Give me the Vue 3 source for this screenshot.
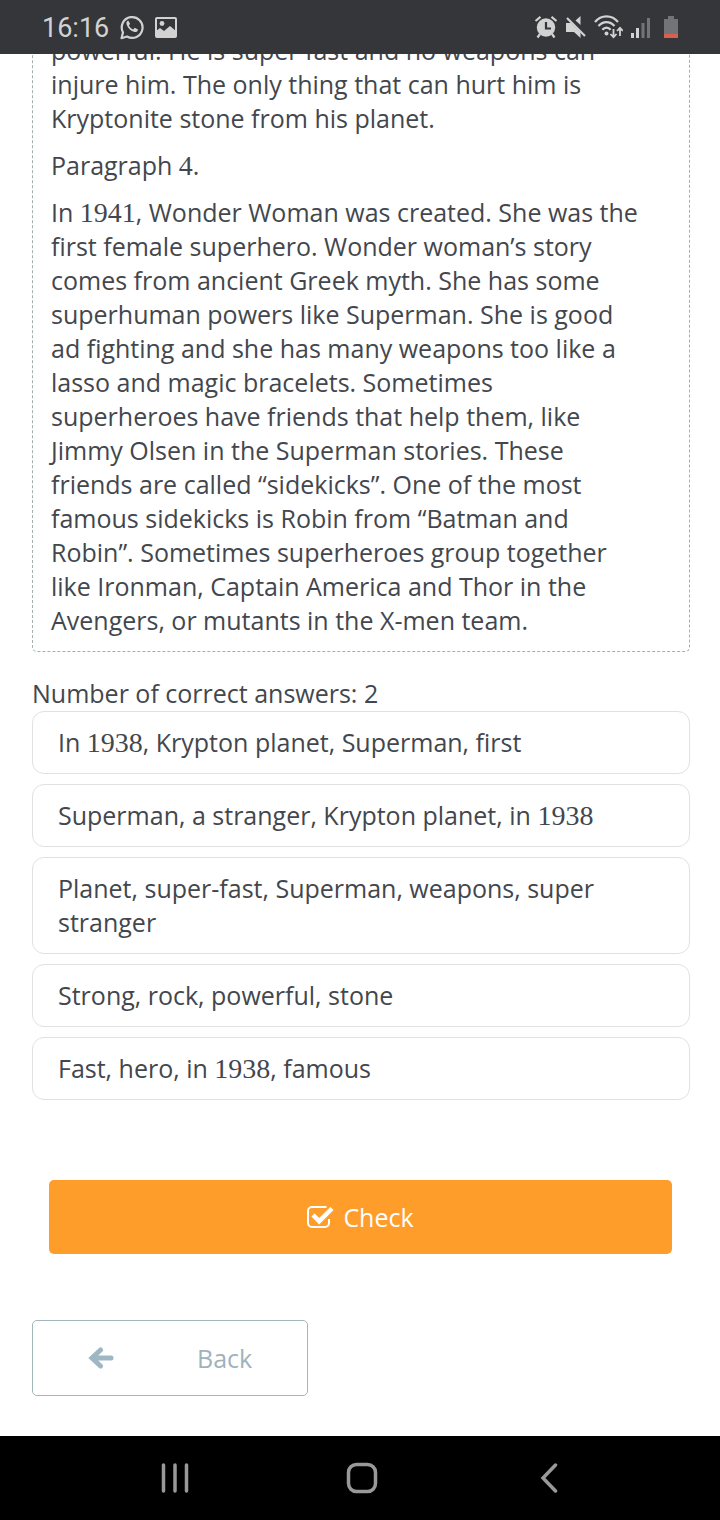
<script setup>
import { ref } from 'vue'

const paragraphs = [
  'powerful. He is super fast and no weapons can\ninjure him. The only thing that can hurt him is\nKryptonite stone from his planet.',
  'Paragraph 4.',
  'In 1941, Wonder Woman was created. She was the\nfirst female superhero. Wonder woman’s story\ncomes from ancient Greek myth. She has some\nsuperhuman powers like Superman. She is good\nad fighting and she has many weapons too like a\nlasso and magic bracelets. Sometimes\nsuperheroes have friends that help them, like\nJimmy Olsen in the Superman stories. These\nfriends are called “sidekicks”. One of the most\nfamous sidekicks is Robin from “Batman and\nRobin”. Sometimes superheroes group together\nlike Ironman, Captain America and Thor in the\nAvengers, or mutants in the X-men team.',
]

const options = [
  'In 1938, Krypton planet, Superman, first',
  'Superman, a stranger, Krypton planet, in 1938',
  'Planet, super-fast, Superman, weapons, super stranger',
  'Strong, rock, powerful, stone',
  'Fast, hero, in 1938, famous',
]

const chosen = ref([])

// Splits a sentence so that its numbers can be set in the maths face.
const parts = (text) => text.split(/(\d+)/).filter(Boolean)
const isNumber = (part) => /^\d+$/.test(part)

function toggle(index) {
  chosen.value = chosen.value.includes(index)
    ? chosen.value.filter((i) => i !== index)
    : [...chosen.value, index]
}
</script>

<template>
  <div class="screen">
    <header class="status">
      <div class="status-group left">
        <span class="clock">16:16</span>
        <svg width="24" height="26" viewBox="0 0 24 26" fill="none" aria-hidden="true">
          <path d="M1.5 24.2 3 18.4A10.4 10.4 0 1 1 7 22.5Z" stroke="#d2d2d3" stroke-width="2.2" stroke-linejoin="round" />
          <path d="M8.2 6.6c-1.7.6-2.2 2.5-1.4 4.5 1.300 3.200 3.700 5.600 7 6.700 2.200.7 4-.3 4.200-2.400l-3.300-1.700-1.500 1.700c-1.900-.8-3.400-2.200-4.300-4l1.200-1.600z" fill="#d2d2d3" />
        </svg>
        <svg width="22" height="21" viewBox="0 0 22 21" aria-hidden="true">
          <rect x="1" y="1" width="20" height="19" rx="1" fill="none" stroke="#d2d2d3" stroke-width="2" />
          <circle cx="7" cy="6.500" r="2.400" fill="#d2d2d3" />
          <path d="M1 14l4-3 4 3 6-5 6 5v6H1z" fill="#d2d2d3" />
        </svg>
      </div>
      <div class="status-group right">
        <svg width="24" height="24" viewBox="0 0 24 24" fill="none" aria-hidden="true">
          <circle cx="12" cy="12.500" r="9.200" fill="#d2d2d3" />
          <path d="M1.500 6 6.500 1.800M22.500 6l-5-4.200M6 19l-2.500 3.500M18 19l2.500 3.500" stroke="#d2d2d3" stroke-width="2.200" />
          <path d="M12 7v6.500h5" stroke="#35363a" stroke-width="2.200" />
        </svg>
        <svg width="20" height="24" viewBox="0 0 20 24" aria-hidden="true">
          <path d="M0 8h5l9.500 9.500V23L8 17H0zM14.500 1v9L9.500 5.500z" fill="#d2d2d3" />
          <path d="M1 3l18 18" stroke="#d2d2d3" stroke-width="2.200" />
        </svg>
        <svg width="29" height="24" viewBox="0 0 29 24" fill="none" aria-hidden="true">
          <path d="M1 7C7-.5 18-.5 24 7M4.500 11c4.500-5.300 11.500-5.300 16 0M8.300 14.700c2.600-2.900 5.800-2.900 8.400 0" stroke="#d2d2d3" stroke-width="2.200" />
          <circle cx="12.500" cy="18.500" r="2" fill="#d2d2d3" />
          <path d="M19.500 14v8M16.500 19l3 3.200 3-3.200M26 21v-8M23 16l3-3.200 3 3.200" stroke="#d2d2d3" stroke-width="1.800" />
        </svg>
        <svg width="19" height="21" viewBox="0 0 19 21" aria-hidden="true">
          <path d="M0 16h3v5H0zM5 11h3v10H5z" fill="#d2d2d3" />
          <path d="M10.500 6h3v15h-3zM16 1h3v20h-3z" fill="#737477" />
        </svg>
        <svg class="battery" width="14" height="22" viewBox="0 0 14 22" aria-hidden="true">
          <path d="M4 0h6v3h4v16H0V3h4z" fill="#737477" />
          <path d="M0 18h14v4H0z" fill="#d9604f" />
        </svg>
      </div>
    </header>

    <main class="content">
      <div class="viewport">
        <article class="passage">
          <p v-for="(text, i) in paragraphs" :key="i">
            <span v-for="(part, j) in parts(text)" :key="j" :class="{ num: isNumber(part) }">{{ part }}</span>
          </p>
        </article>
      </div>

      <p class="hint">Number of correct answers: 2</p>

      <div class="options">
        <button
          v-for="(text, i) in options"
          :key="i"
          type="button"
          class="option"
          :aria-pressed="chosen.includes(i)"
          @click="toggle(i)"
        >
          <span v-for="(part, j) in parts(text)" :key="j" :class="{ num: isNumber(part) }">{{ part }}</span>
        </button>
      </div>

      <button type="button" class="check">
        <svg width="28" height="24" viewBox="0 0 28 24" fill="none" aria-hidden="true">
          <path d="M19.500 2H5a4 4 0 0 0-4 4v12a4 4 0 0 0 4 4h13a4 4 0 0 0 4-4v-4" stroke="#fff" stroke-width="2" />
          <path d="M6 10l6.200 6.200L25 3.500" stroke="#fff" stroke-width="4.500" />
        </svg>
        <span>Check</span>
      </button>

      <button type="button" class="back">
        <svg width="26" height="22" viewBox="0 0 26 22" fill="none" aria-hidden="true">
          <path d="M12.500 3 4 11l8.500 8M4.500 11H23" stroke="#9fb6c3" stroke-width="5" stroke-linecap="round" />
        </svg>
        <span>Back</span>
      </button>
    </main>

    <nav class="navbar">
      <button type="button" aria-label="Recent apps">
        <svg width="28" height="30" viewBox="0 0 28 30" aria-hidden="true">
          <path d="M2.500 2v26M14 2v26M25.500 2v26" stroke="#999" stroke-width="3.500" stroke-linecap="round" />
        </svg>
      </button>
      <button type="button" aria-label="Home">
        <svg width="32" height="32" viewBox="0 0 32 32" aria-hidden="true">
          <rect x="2.500" y="2.500" width="27" height="27" rx="8" fill="none" stroke="#999" stroke-width="3.500" />
        </svg>
      </button>
      <button type="button" aria-label="Go back">
        <svg width="18" height="30" viewBox="0 0 18 30" aria-hidden="true">
          <path d="M15.500 2 3 15l12.500 13" fill="none" stroke="#999" stroke-width="3.500" stroke-linecap="round" />
        </svg>
      </button>
    </nav>
  </div>
</template>

<style>
body {
  background: #fff;
}
</style>

<style scoped>
.screen {
  display: flex;
  flex-direction: column;
  min-height: 100vh;
  font: 25px/34px "Open Sans", "Noto Sans", sans-serif;
  color: #43474d;
}

button {
  margin: 0;
  font: inherit;
  cursor: pointer;
}

svg {
  display: block;
  flex: none;
}

.status {
  display: flex;
  justify-content: space-between;
  align-items: center;
  height: 54px;
  padding: 0 42px;
  background: #35363a;
  color: #d2d2d3;
}

.status-group {
  display: flex;
  align-items: center;
}

.left {
  gap: 11px;
}

.right {
  gap: 8px;
}

.clock {
  padding-top: 2px;
  font-family: Roboto, sans-serif;
  font-size: 27px;
}

.battery {
  margin-left: 6px;
}

.content {
  flex: 1;
  display: flex;
  flex-direction: column;
  padding: 0 30px 40px 32px;
}

.viewport {
  overflow: hidden;
}

.passage {
  display: flex;
  flex-direction: column;
  gap: 13px;
  margin-top: -21px;
  padding: 0 18px 14px;
  border: 1px dashed #a3afb0;
  border-top: 0;
  border-radius: 0 0 5px 5px;
}

.passage p {
  margin: 0;
  white-space: pre-line;
}

.num {
  font-family: "Liberation Serif", serif;
  font-size: 28px;
  line-height: 1;
}

.hint {
  margin: 24px 0 1px;
}

.options {
  display: flex;
  flex-direction: column;
  gap: 10px;
}

.option {
  padding: 13px 25px 14px;
  border: 1px solid #e0e1e2;
  border-radius: 12px;
  background: #fff;
  color: inherit;
  text-align: left;
}

.check {
  display: flex;
  justify-content: center;
  align-items: center;
  gap: 8px;
  margin: 80px 18px 0 17px;
  padding: 20px;
  border: 0;
  border-radius: 5px;
  background: #ff9d2b;
  color: #fff;
}

.back {
  display: flex;
  align-items: center;
  gap: 83px;
  width: 42%;
  margin-top: 66px;
  padding: 20px 55px;
  border: 1px solid #a2b7bb;
  border-radius: 5px;
  background: #fff;
  color: #9fb2be;
}

.navbar {
  display: grid;
  grid-template-columns: repeat(3, 1fr);
  place-items: center;
  flex: none;
  height: 84px;
  padding: 0 78px 0 82px;
  box-sizing: border-box;
  background: #000;
}

.navbar button {
  padding: 0;
  border: 0;
  background: none;
}
</style>
